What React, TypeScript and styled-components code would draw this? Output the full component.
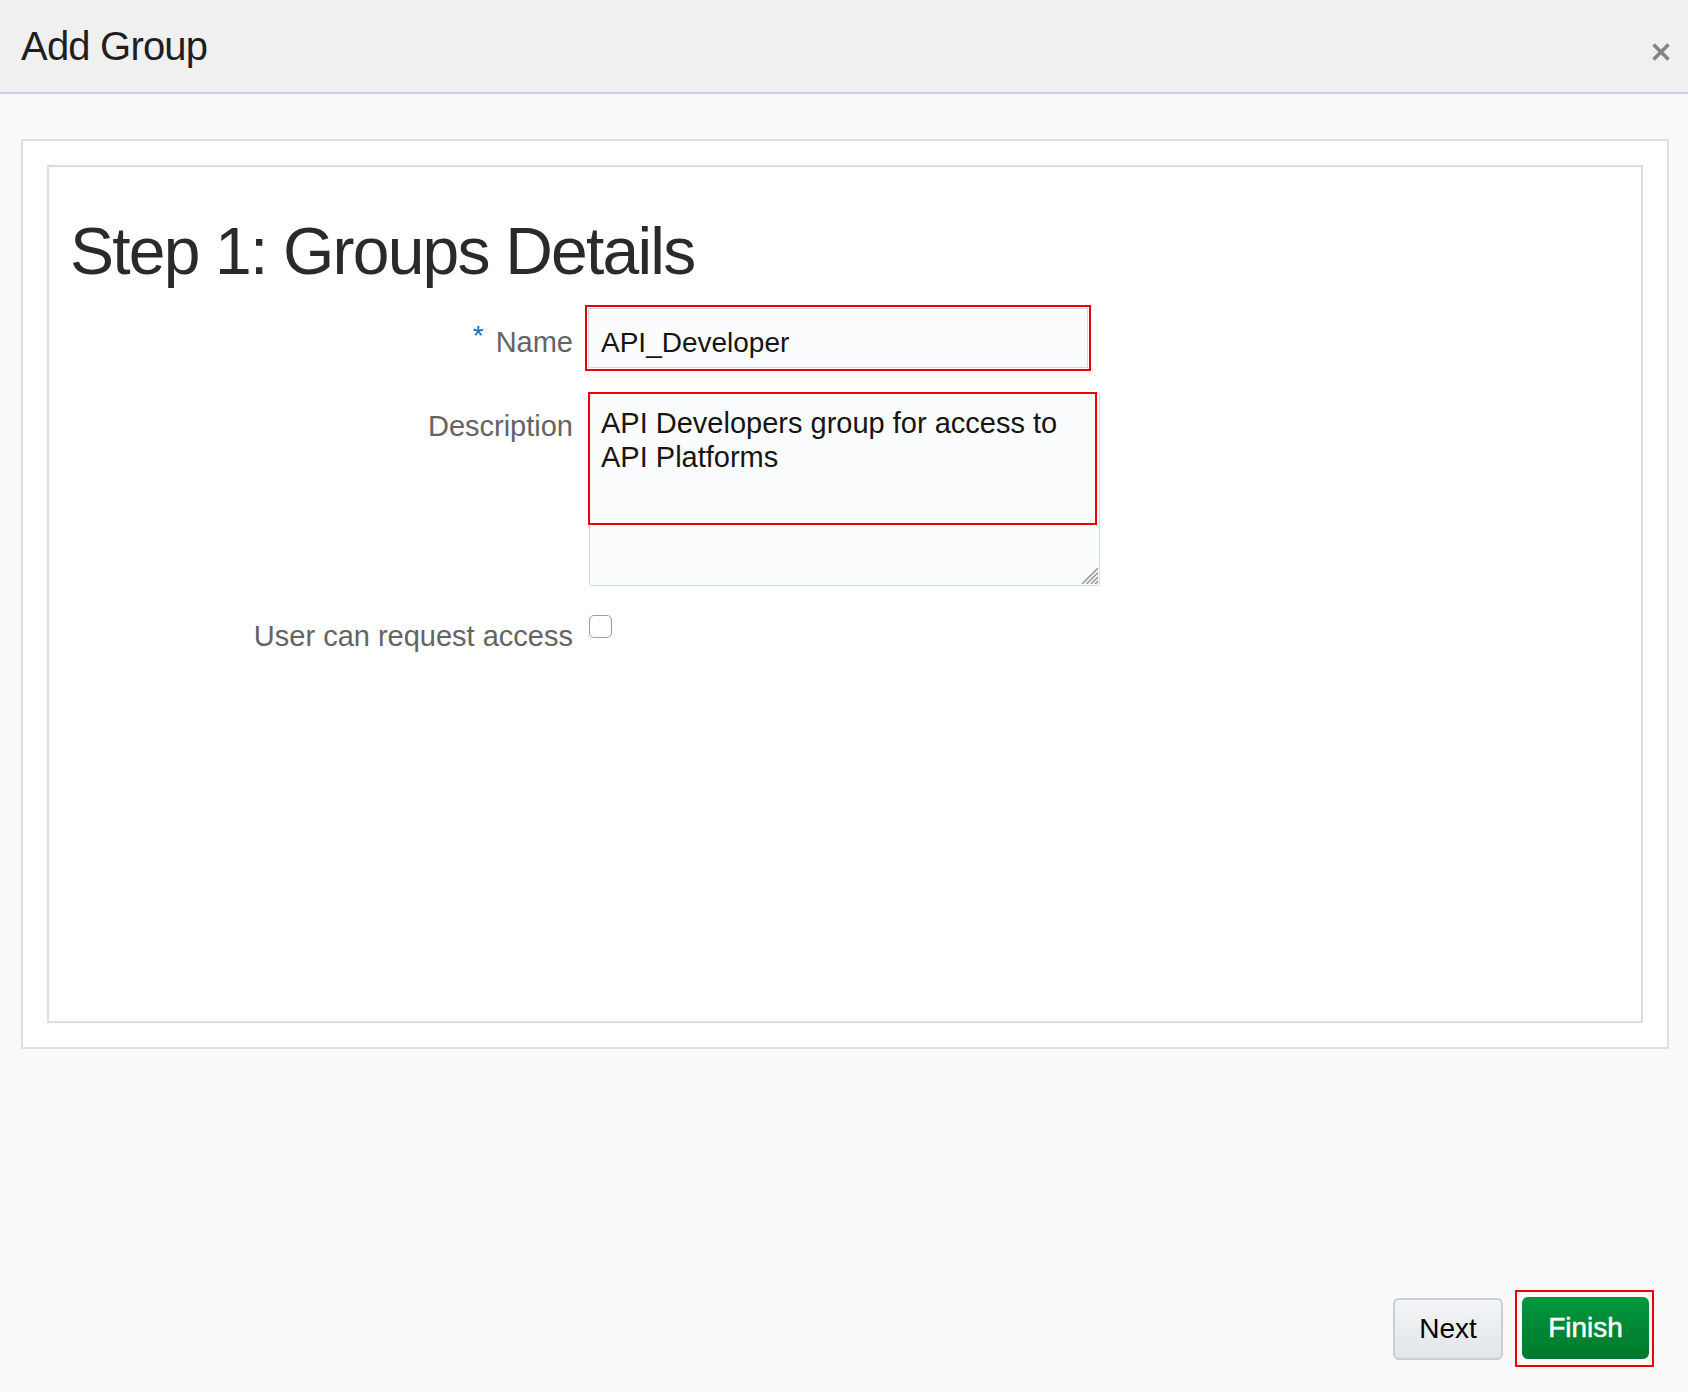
import React from "react";
import styled, { createGlobalStyle, css } from "styled-components";

const GlobalStyle = createGlobalStyle`
  html, body {
    margin: 0;
    padding: 0;
    background: #f9f9f9;
    font-family: "Liberation Sans", Arial, sans-serif;
  }
  * {
    box-sizing: border-box;
  }
  #root {
    min-height: 100vh;
  }
`;

const Page = styled.div`
  min-height: 100vh;
  display: flex;
  flex-direction: column;
  background: #f9f9f9;
`;

const Header = styled.header`
  height: 94px;
  flex: none;
  display: flex;
  justify-content: space-between;
  align-items: center;
  padding: 0 17px 0 21px;
  background: #f0f0f0;
  border-bottom: 2px solid #cbd3dc;
`;

const DialogTitle = styled.h1`
  margin: 0;
  font-size: 40px;
  line-height: 1;
  font-weight: normal;
  letter-spacing: -0.8px;
  color: #1f1f1f;
`;

const CloseButton = styled.button`
  align-self: flex-start;
  margin-top: 42px;
  width: 20px;
  height: 20px;
  padding: 0;
  border: none;
  background: transparent;
  cursor: pointer;
  display: flex;
  svg {
    display: block;
  }
`;

const Main = styled.main`
  flex: 1;
  display: flex;
  flex-direction: column;
  padding: 45px 19px 0 21px;
`;

const OuterPanel = styled.section`
  background: #fff;
  border: 2px solid #d8e0e8;
  padding: 24px;
`;

const InnerPanel = styled.div`
  height: 858px;
  border: 2px solid #d6dfe7;
  padding: 47px 21px 0 21px;
`;

const StepTitle = styled.h2`
  margin: 0;
  font-size: 66px;
  line-height: 1.15;
  font-weight: normal;
  letter-spacing: -1.8px;
  color: #2a2a2a;
`;

const Form = styled.div`
  margin-top: 15px;
  display: grid;
  grid-template-columns: 503px auto;
  column-gap: 12px;
  row-gap: 21px;
  justify-content: start;
  align-items: start;
`;

const Label = styled.label<{ $pad: number }>`
  display: block;
  text-align: right;
  padding-top: ${(p) => p.$pad}px;
  font-size: 29px;
  line-height: 34px;
  color: #646464;
  white-space: nowrap;
`;

const Required = styled.span`
  color: #0a6fc9;
  font-size: 28px;
  vertical-align: 7px;
  margin-right: 12px;
`;

const Highlight = styled.div<{ $pad?: string }>`
  display: inline-flex;
  border: 2px solid #ee0000;
  padding: ${(p) => p.$pad ?? "1px"};
`;

const fieldText = css`
  font-family: "Liberation Sans", Arial, sans-serif;
  color: #161513;
  background: #fbfcfd;
  outline: none;
`;

const TextInput = styled.input`
  ${fieldText};
  font-size: 28px;
  width: 500px;
  height: 60px;
  border: 1px solid #d2d8de;
  padding: 10px 12px 0;
`;

const AreaWrap = styled.div`
  position: relative;
  margin-left: 4px;
  width: 511px;
`;

const TextArea = styled.textarea`
  ${fieldText};
  font-size: 29px;
  display: block;
  width: 511px;
  height: 194px;
  border: 1px solid #d7dce1;
  border-radius: 2px;
  padding: 13px 30px 12px 11px;
  line-height: 34px;
  resize: none;
`;

const Grip = styled.svg`
  position: absolute;
  right: 2px;
  bottom: 2px;
  pointer-events: none;
`;

const AreaMark = styled.div`
  position: absolute;
  left: -1px;
  top: 0;
  width: 509px;
  height: 133px;
  border: 2px solid #ee0000;
  pointer-events: none;
`;

const Checkbox = styled.input`
  appearance: none;
  margin: 8px 0 0 4px;
  width: 23px;
  height: 23px;
  border: 1.5px solid #9aa0a6;
  border-radius: 5px;
  background: #fff;
`;

const Footer = styled.footer`
  margin-top: auto;
  display: flex;
  justify-content: flex-end;
  align-items: center;
  gap: 12px;
  padding: 0 15px 25px 0;
`;

const Button = styled.button<{ $primary?: boolean }>`
  height: 62px;
  border-radius: 6px;
  font-family: "Liberation Sans", Arial, sans-serif;
  font-size: 28px;
  cursor: pointer;
  ${(p) =>
    p.$primary
      ? css`
          width: 127px;
          border: none;
          color: #fff;
          -webkit-text-stroke: 0.5px #fff;
          background: linear-gradient(#02973d, #00782d);
        `
      : css`
          width: 110px;
          border: 2px solid #c6cfd9;
          color: #000;
          background: linear-gradient(#f3f4f5, #e2e5e8);
        `}
`;

export default function App() {
  return (
    <>
      <GlobalStyle />
      <Page>
        <Header>
          <DialogTitle>Add Group</DialogTitle>
          <CloseButton aria-label="Close">
            <svg width="20" height="20" viewBox="0 0 20 20">
              <path
                d="M2.5 2.5 L17.5 17.5 M17.5 2.5 L2.5 17.5"
                stroke="#80858a"
                strokeWidth="3.6"
              />
            </svg>
          </CloseButton>
        </Header>
        <Main>
          <OuterPanel>
            <InnerPanel>
              <StepTitle>Step 1: Groups Details</StepTitle>
              <Form>
                <Label $pad={14} htmlFor="name">
                  <Required>*</Required>Name
                </Label>
                <div>
                  <Highlight>
                    <TextInput id="name" defaultValue="API_Developer" />
                  </Highlight>
                </div>

                <Label $pad={17} htmlFor="desc">
                  Description
                </Label>
                <AreaWrap>
                  <TextArea
                    id="desc"
                    defaultValue="API Developers group for access to API Platforms"
                  />
                  <Grip width="19" height="19" viewBox="0 0 19 19">
                    <path
                      d="M3 19 L19 3 M7.5 19 L19 7.5 M12 19 L19 12 M16 19 L19 16"
                      stroke="#9b9b9b"
                      strokeWidth="1.6"
                    />
                  </Grip>
                  <AreaMark />
                </AreaWrap>

                <Label $pad={12} htmlFor="request">
                  User can request access
                </Label>
                <div>
                  <Checkbox id="request" type="checkbox" />
                </div>
              </Form>
            </InnerPanel>
          </OuterPanel>
          <Footer>
            <Button>Next</Button>
            <Highlight $pad="5px 3px 6px 5px">
              <Button $primary>Finish</Button>
            </Highlight>
          </Footer>
        </Main>
      </Page>
    </>
  );
}
